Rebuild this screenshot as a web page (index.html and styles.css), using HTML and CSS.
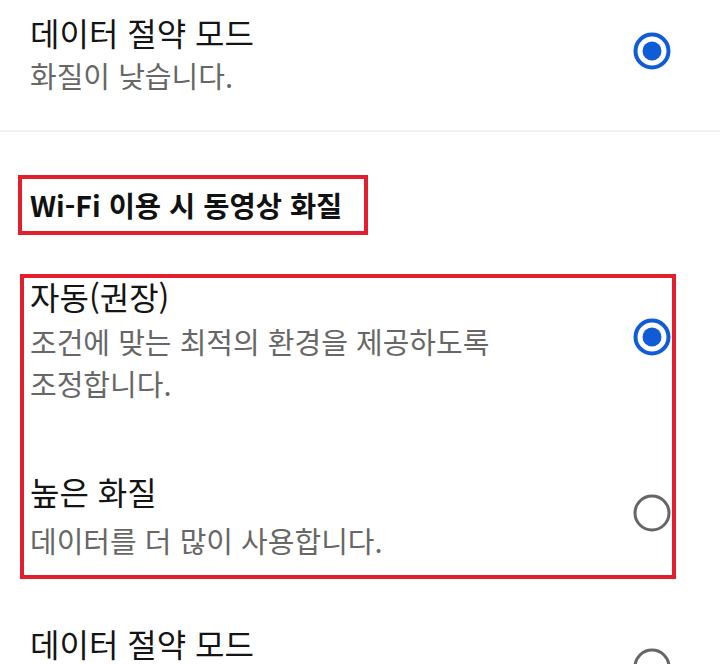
FILE: index.html
```html
<!DOCTYPE html>
<html lang="ko">
<head>
<meta charset="utf-8">
<link rel="stylesheet" href="styles.css">
</head>
<body>
<div class="screen">
  <div class="row row-top">
    <div class="text">
      <div class="title">데이터 절약 모드</div>
      <div class="sub">화질이 낮습니다.</div>
    </div>
    <svg class="radio" viewBox="0 0 40 40" width="40" height="40"><circle cx="20" cy="20" r="16.5" fill="none" stroke="#0f5cd6" stroke-width="4"/><circle cx="20" cy="20" r="9.5" fill="#0f5cd6"/></svg>
  </div>
  <div class="divider"></div>

  <div class="header-box"><span class="header">Wi-Fi 이용 시 동영상 화질</span></div>

  <div class="options-box">
    <div class="row row-opt1">
      <div class="text">
        <div class="title">자동(권장)</div>
        <div class="sub sub-wrap">조건에 맞는 최적의 환경을 제공하도록 조정합니다.</div>
      </div>
      <svg class="radio" viewBox="0 0 40 40" width="40" height="40"><circle cx="20" cy="20" r="16.5" fill="none" stroke="#0f5cd6" stroke-width="4"/><circle cx="20" cy="20" r="9.5" fill="#0f5cd6"/></svg>
    </div>
    <div class="row row-opt2">
      <div class="text">
        <div class="title">높은 화질</div>
        <div class="sub sub-2">데이터를 더 많이 사용합니다.</div>
      </div>
      <svg class="radio" viewBox="0 0 40 40" width="40" height="40"><circle cx="20" cy="20" r="17" fill="none" stroke="#666666" stroke-width="3"/></svg>
    </div>
  </div>

  <div class="row row-bottom">
    <div class="text">
      <div class="title">데이터 절약 모드</div>
    </div>
    <svg class="radio" viewBox="0 0 40 40" width="40" height="40"><circle cx="20" cy="20" r="17" fill="none" stroke="#666666" stroke-width="3"/></svg>
  </div>
</div>
</body>
</html>
```
FILE: styles.css
```css
html, body {
  margin: 0;
  padding: 0;
  background: #ffffff;
}
.screen {
  width: 720px;
  height: 664px;
  overflow: hidden;
  font-family: "Noto Sans CJK KR", "Noto Sans", sans-serif;
}
.row {
  display: flex;
  align-items: center;
  justify-content: space-between;
}
.radio {
  flex: none;
  margin-bottom: 8px;
}
.title {
  font-size: 32px;
  line-height: 36px;
  color: #141414;
}
.sub {
  font-size: 29px;
  line-height: 42px;
  color: #676767;
  word-break: keep-all;
}
.row-top {
  padding: 14px 48px 34px 30px;
}
.row-top .sub {
  margin-top: 4px;
}
.divider {
  height: 2px;
  background: #f1f1f1;
}
.header-box {
  margin: 43px 0 0 18px;
  height: 52px;
  border: 4px solid #e31e2d;
  padding-left: 8px;
  width: 334px;
}
.header {
  font-size: 28.5px;
  line-height: 52px;
  font-weight: 700;
  color: #111;
  white-space: nowrap;
}
.options-box {
  margin: 39px 0 0 20px;
  border: 4px solid #e31e2d;
  padding: 0 0 14px 6px;
  width: 642px;
}
.sub-wrap {
  max-width: 490px;
  margin-top: 6px;
}
.row-opt2 {
  margin-top: 69px;
}
.sub-2 {
  margin-top: 10px;
}
.row-bottom {
  margin-top: 46px;
  padding: 0 48px 0 30px;
  align-items: flex-start;
}
.row-bottom .radio {
  margin-top: 22px;
}
```
